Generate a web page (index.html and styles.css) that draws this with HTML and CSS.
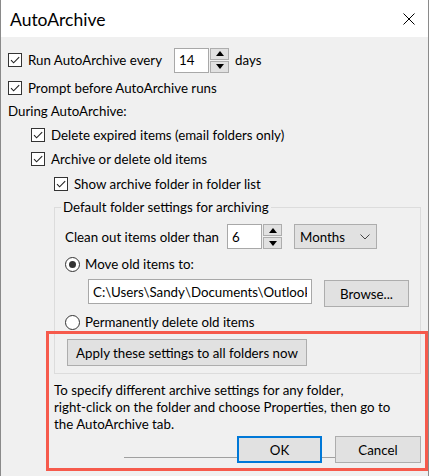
FILE: index.html
```html
<!DOCTYPE html>
<html>
<head>
<meta charset="utf-8">
<link rel="stylesheet" href="styles.css">
</head>
<body>

<div class="window">
  <div class="titlebar">
    <span class="title">AutoArchive</span>
    <svg class="close" width="12" height="12" viewBox="0 0 12 12"><path d="M0.5 0.5L11.5 11.5M11.5 0.5L0.5 11.5" stroke="#000" stroke-width="1" fill="none"/></svg>
  </div>

  <div class="content">
    <div class="row row-run">
      <label class="check run-label"><span class="box"><svg width="12" height="12" viewBox="0 0 12 12"><path d="M2 6.2l2.6 2.6L10.2 3.2" fill="none" stroke="#222" stroke-width="1.1"/></svg></span>Run AutoArchive every</label>
      <div class="spin">
        <input class="field spin-field" type="text" value="14">
        <div class="spin-buttons">
          <span class="spin-btn"><svg width="8" height="5" viewBox="0 0 8 5"><path d="M0 5L4 0L8 5Z" fill="#000"/></svg></span>
          <span class="spin-btn"><svg width="8" height="5" viewBox="0 0 8 5"><path d="M0 0L8 0L4 5Z" fill="#000"/></svg></span>
        </div>
      </div>
      <span class="unit">days</span>
    </div>

    <div class="row row-prompt">
      <label class="check"><span class="box"><svg width="12" height="12" viewBox="0 0 12 12"><path d="M2 6.2l2.6 2.6L10.2 3.2" fill="none" stroke="#222" stroke-width="1.1"/></svg></span>Prompt before AutoArchive runs</label>
    </div>

    <div class="row row-during">During AutoArchive:</div>

    <div class="row row-expired indent1">
      <label class="check"><span class="box"><svg width="12" height="12" viewBox="0 0 12 12"><path d="M2 6.2l2.6 2.6L10.2 3.2" fill="none" stroke="#222" stroke-width="1.1"/></svg></span>Delete expired items (email folders only)</label>
    </div>

    <div class="row row-old indent1">
      <label class="check"><span class="box"><svg width="12" height="12" viewBox="0 0 12 12"><path d="M2 6.2l2.6 2.6L10.2 3.2" fill="none" stroke="#222" stroke-width="1.1"/></svg></span>Archive or delete old items</label>
    </div>

    <div class="row row-show indent2">
      <label class="check"><span class="box"><svg width="12" height="12" viewBox="0 0 12 12"><path d="M2 6.2l2.6 2.6L10.2 3.2" fill="none" stroke="#222" stroke-width="1.1"/></svg></span>Show archive folder in folder list</label>
    </div>

    <fieldset class="group">
      <legend>Default folder settings for archiving</legend>

      <div class="row row-clean">
        <span class="clean-label">Clean out items older than</span>
        <div class="spin">
          <input class="field spin-field" type="text" value="6">
          <div class="spin-buttons">
            <span class="spin-btn"><svg width="8" height="5" viewBox="0 0 8 5"><path d="M0 5L4 0L8 5Z" fill="#000"/></svg></span>
            <span class="spin-btn"><svg width="8" height="5" viewBox="0 0 8 5"><path d="M0 0L8 0L4 5Z" fill="#000"/></svg></span>
          </div>
        </div>
        <div class="dropdown">
          <span>Months</span>
          <svg width="10" height="6" viewBox="0 0 10 6"><path d="M0.5 0.5L5 5L9.5 0.5" fill="none" stroke="#444" stroke-width="1"/></svg>
        </div>
      </div>

      <div class="row row-move">
        <label class="check"><span class="radio on"></span>Move old items to:</label>
      </div>

      <div class="row row-path">
        <input class="field path-field" type="text" value="C:\Users\Sandy\Documents\Outlook Files\archive.pst">
        <button class="btn browse" type="button">Browse...</button>
      </div>

      <div class="row row-perm">
        <label class="check"><span class="radio"></span>Permanently delete old items</label>
      </div>

      <div class="row row-apply">
        <button class="btn apply" type="button">Apply these settings to all folders now</button>
      </div>
    </fieldset>

    <p class="note">To specify different archive settings for any folder,<br>right-click on the folder and choose Properties, then go to<br>the AutoArchive tab.</p>

    <div class="actions">
      <button class="btn ok" type="button">OK</button>
      <button class="btn cancel" type="button">Cancel</button>
    </div>
  </div>

  <div class="highlight"></div>
</div>

</body>
</html>
```

FILE: styles.css
```css
body {
  margin: 0;
  font-family: Lato, "Liberation Sans", sans-serif;
  font-size: 13.3px;
  color: #000;
  background: #fff;
}

.window {
  position: relative;
  width: 429px;
  height: 476px;
  box-sizing: border-box;
  border-left: 1px solid #8a8a8a;
  border-right: 1px solid #8a8a8a;
  background: #f0f0f0;
}

.titlebar {
  height: 37px;
  background: #fff;
  display: flex;
  align-items: center;
  justify-content: space-between;
  padding: 0 13px 0 9px;
}

.title {
  font-size: 17.5px;
  padding-top: 2px;
}

.content {
  padding: 0 7px;
}

.row {
  display: flex;
  align-items: center;
  white-space: nowrap;
}

.indent1 {
  padding-left: 23px;
}

.indent2 {
  padding-left: 46px;
}

.check {
  display: flex;
  align-items: center;
}

.box {
  flex: none;
  width: 12px;
  height: 12px;
  border: 1px solid #333;
  background: #fff;
  margin-right: 6px;
  display: flex;
  align-items: center;
  justify-content: center;
}

.radio {
  flex: none;
  position: relative;
  width: 13px;
  height: 13px;
  border: 1px solid #333;
  border-radius: 50%;
  background: #fff;
  margin-right: 5px;
}

.radio.on::after {
  content: "";
  position: absolute;
  left: 3px;
  top: 3px;
  width: 7px;
  height: 7px;
  border-radius: 50%;
  background: #333;
}

/* rows of the top part */
.row-run {
  margin-top: 10px;
  height: 26px;
}

.run-label {
  width: 166px;
}

.row-prompt {
  height: 29px;
}

.row-during {
  height: 18px;
}

.row-expired {
  height: 30px;
}

.row-old {
  height: 18px;
}

.row-show {
  height: 32px;
}

/* text fields and spinners */
.field {
  box-sizing: border-box;
  height: 25px;
  margin: 0;
  padding: 0 4px;
  border: 1px solid #a8a8a8;
  background: #fff;
  font: inherit;
  color: #000;
  outline: none;
}

.spin {
  display: flex;
  gap: 1px;
  height: 25px;
}

.spin-field {
  width: 35px;
}

.spin-buttons {
  display: flex;
  flex-direction: column;
  gap: 1px;
}

.spin-btn {
  box-sizing: border-box;
  width: 19px;
  height: 12px;
  border: 1px solid #adadad;
  background: #e1e1e1;
  display: flex;
  align-items: center;
  justify-content: center;
}

.unit {
  margin-left: 6px;
}

.btn {
  box-sizing: border-box;
  margin: 0;
  padding: 0;
  border: 1px solid #adadad;
  background: #e1e1e1;
  font: inherit;
  color: #000;
  display: flex;
  align-items: center;
  justify-content: center;
}

/* group box */
.group {
  margin: 0 0 0 46px;
  padding: 0 10px 7px 10px;
  border: 1px solid #dcdcdc;
  min-width: 0;
}

.group legend {
  padding: 0 2px;
  margin-left: -4px;
  line-height: 14px;
}

.row-clean {
  margin-top: 10px;
  height: 25px;
}

.clean-label {
  width: 162px;
}

.dropdown {
  box-sizing: border-box;
  width: 83px;
  height: 25px;
  margin-left: 12px;
  padding: 0 6px 0 5px;
  border: 1px solid #adadad;
  background: #e1e1e1;
  display: flex;
  align-items: center;
  justify-content: space-between;
}

.row-move {
  height: 30px;
}

.row-path {
  height: 28px;
  align-items: flex-start;
}

.path-field {
  width: 224px;
  margin-left: 23px;
}

.browse {
  width: 85px;
  height: 27px;
  margin: 1px 0 0 12px;
}

.row-perm {
  height: 30px;
}

.row-apply {
  margin-top: 2px;
}

.apply {
  width: 240px;
  height: 27px;
  margin-left: 2px;
}

/* note and dialog buttons */
.note {
  margin: 8px 0 0 46px;
  line-height: 17px;
  white-space: nowrap;
}

.actions {
  position: relative;
  display: flex;
  justify-content: flex-end;
  gap: 13px;
  margin-top: 3px;
}

.actions::before {
  content: "";
  position: absolute;
  left: 116px;
  right: 0;
  top: 21px;
  height: 1px;
  background: #a0a0a0;
}

.ok,
.cancel {
  position: relative;
  height: 27px;
}

.ok {
  width: 85px;
  border: 2px solid #0078d7;
}

.cancel {
  width: 86px;
}

.highlight {
  position: absolute;
  left: 45px;
  top: 331px;
  width: 382px;
  height: 140px;
  box-sizing: border-box;
  border: 3px solid #f65a4c;
  pointer-events: none;
}
```
